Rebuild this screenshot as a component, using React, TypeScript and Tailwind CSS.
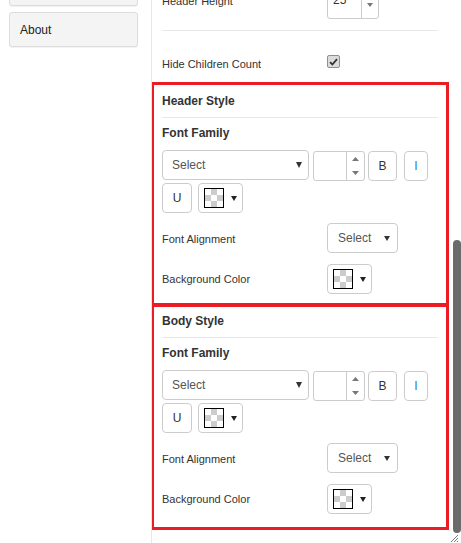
import React from "react";

function Tri({ w = 6, h = 5, color = "#333" }: { w?: number; h?: number; color?: string }) {
  return (
    <svg width={w} height={h} viewBox={`0 0 ${w} ${h}`} className="block shrink-0">
      <polygon points={`0,0 ${w},0 ${w / 2},${h}`} fill={color} />
    </svg>
  );
}

function UpTri({ w = 7, h = 4, color = "#777" }: { w?: number; h?: number; color?: string }) {
  return (
    <svg width={w} height={h} viewBox={`0 0 ${w} ${h}`} className="block">
      <polygon points={`0,${h} ${w},${h} ${w / 2},0`} fill={color} />
    </svg>
  );
}

function Swatch() {
  return (
    <span className="block w-[20px] h-[20px] shrink-0 border border-black [background-image:conic-gradient(#cccccc_25%,#ffffff_0_50%,#cccccc_0_75%,#ffffff_0)] [background-size:12px_12px]" />
  );
}

function ColorBtn({ className = "" }: { className?: string }) {
  return (
    <div className={`w-[45px] h-[30px] border border-[#ccc] rounded-[4px] bg-white flex items-center pl-[5px] ${className}`}>
      <Swatch />
      <span className="ml-[7px]">
        <Tri w={6} h={5} color="#222" />
      </span>
    </div>
  );
}

function StyleBox({ title, className }: { title: string; className: string }) {
  return (
    <div className={`-ml-px w-[298px] border-[3px] border-[#ec1c24] px-[8px] ${className}`}>
      <div className="text-[12px] leading-[16px] font-bold text-[#333]">{title}</div>
      <div className="mt-[8px] h-px bg-[#e8e8e8]" />
      <div className="mt-[7px] text-[12px] leading-[16px] font-bold text-[#333]">Font Family</div>
      <div className="mt-[9px] flex items-start">
        <div className="w-[147px] h-[30px] border border-[#ccc] rounded-[4px] flex items-center justify-between pl-[9px] pr-[6px] text-[12px] text-[#555]">
          <span>Select</span>
          <Tri w={6} h={6} color="#333" />
        </div>
        <div className="ml-[4px] mt-px w-[52px] h-[30px] border border-[#ccc] rounded-[3px] flex">
          <div className="flex-1" />
          <div className="w-[18px] border-l border-[#ccc] flex flex-col items-center justify-center gap-[10px]">
            <UpTri />
            <Tri w={7} h={4} color="#777" />
          </div>
        </div>
        <div className="ml-[3px] mt-px w-[29px] h-[30px] border border-[#ccc] rounded-[4px] flex items-center justify-center text-[12px] text-[#333]">
          B
        </div>
        <div className="ml-[7px] mt-px w-[24px] h-[30px] border border-[#ccc] rounded-[4px] flex items-center justify-center text-[12px] text-[#2b7bd0]">
          I
        </div>
      </div>
      <div className="mt-[2px] flex items-start">
        <div className="w-[30px] h-[30px] border border-[#ccc] rounded-[4px] flex items-center justify-center text-[12px] text-[#333]">
          U
        </div>
        <ColorBtn className="ml-[6px]" />
      </div>
      <div className="mt-[10px] flex items-center">
        <div className="w-[165px] text-[11px] leading-[13px] text-[#333] mt-[2px]">Font Alignment</div>
        <div className="w-[71px] h-[30px] border border-[#ccc] rounded-[4px] flex items-center justify-between pl-[10px] pr-[7px] text-[12px] text-[#555]">
          <span>Select</span>
          <Tri w={6} h={5} color="#333" />
        </div>
      </div>
      <div className="mt-[11px] flex items-center">
        <div className="w-[165px] text-[11px] leading-[13px] text-[#333]">Background Color</div>
        <ColorBtn />
      </div>
    </div>
  );
}

export default function App() {
  return (
    <div className="relative flex w-[462px] h-[543px] overflow-hidden bg-white font-['Liberation_Sans',Arial,sans-serif] text-[#333]">
      <aside className="w-[151px] shrink-0 px-[9px]">
        <div className="-mt-[30px] h-[36px] w-[129px] rounded-[3px] border border-[#ddd] bg-[#f4f4f4] shadow-[0_1px_1px_rgba(0,0,0,0.06)]" />
        <div className="mt-[6px] h-[35px] w-[129px] rounded-[3px] border border-[#ddd] bg-[#f4f4f4] shadow-[0_1px_1px_rgba(0,0,0,0.06)] flex items-center pl-[10px] text-[12px] text-[#222]">
          About
        </div>
      </aside>

      <main className="w-[301px] shrink-0 border-l border-[#e8e8e8] overflow-hidden">
        <div className="-mt-[11px] flex items-start h-[30px] pl-[10px]">
          <div className="w-[165px] mt-[6px] text-[11px] leading-[13px] text-[#333]">Header Height</div>
          <div className="w-[52px] h-[30px] border border-[#ccc] rounded-[3px] flex">
            <div className="flex-1 pl-[5px] pt-[2px] text-[12px] leading-[16px] text-[#333]">25</div>
            <div className="w-[17px] border-l border-[#ccc] flex items-center justify-center pt-[2px]">
              <Tri w={6} h={4} color="#777" />
            </div>
          </div>
        </div>
        <div className="mt-[11px] ml-[10px] mr-[14px] h-px bg-[#e8e8e8]" />
        <div className="mt-[24px] flex items-start h-[13px] pl-[10px]">
          <div className="w-[165px] mt-[3px] text-[11px] leading-[13px] text-[#333]">Hide Children Count</div>
          <div className="w-[13px] h-[13px] rounded-[2px] border border-[#8f8f8f] bg-[#dcdcdc] flex items-center justify-center">
            <svg width="9" height="8" viewBox="0 0 9 8" className="block">
              <path d="M1 4.2 L3.4 6.5 L8 1.2" stroke="#333" strokeWidth="1.8" fill="none" />
            </svg>
          </div>
        </div>

        <StyleBox title="Header Style" className="mt-[14px] pt-[8px] pb-[9px]" />
        <StyleBox title="Body Style" className="-mt-[2px] pt-[6px] pb-[13px]" />
      </main>

      <div className="w-[10px] shrink-0 border-r border-[#d4d4d4]">
        <div className="mt-[240px] ml-px w-[8px] h-[293px] rounded-full bg-[#6b6b6b]" />
      </div>

      <svg width="9" height="8" viewBox="0 0 9 8" className="absolute right-[3px] bottom-[1px]">
        <path d="M8 1 L1 8 M8 4 L4 8 M8 7 L7 8" stroke="#777" strokeWidth="1" />
      </svg>
    </div>
  );
}
